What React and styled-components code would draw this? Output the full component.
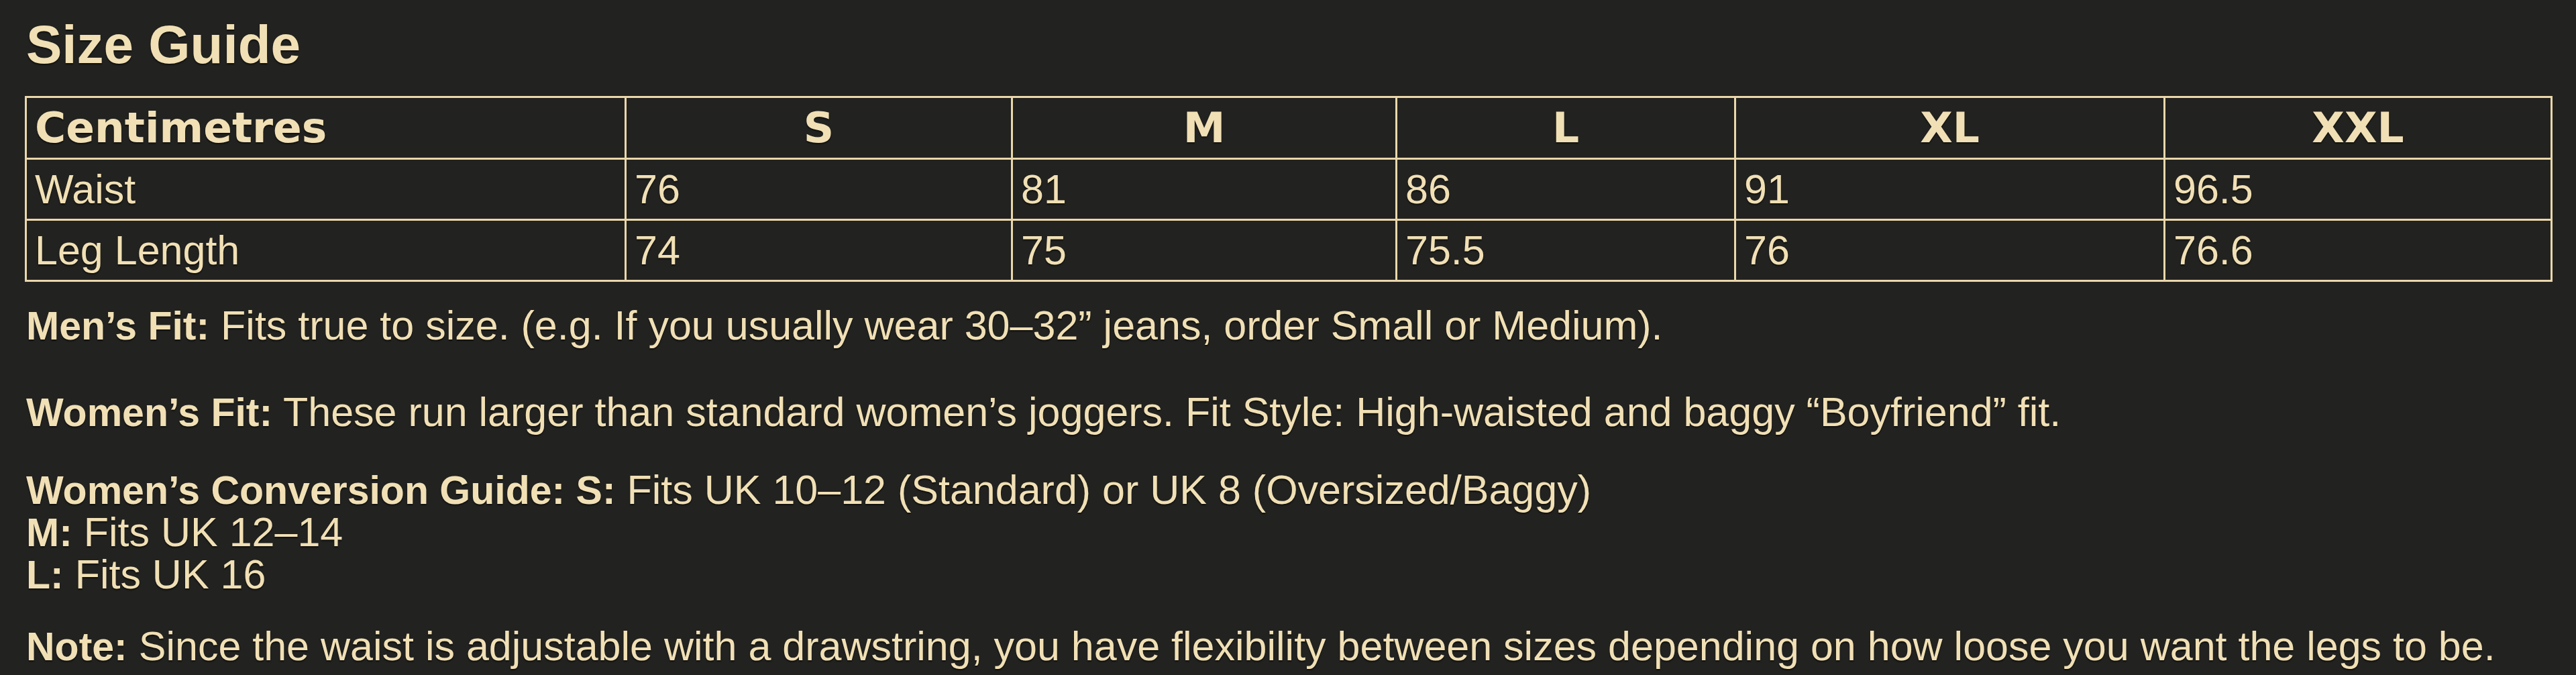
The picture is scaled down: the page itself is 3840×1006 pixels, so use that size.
import styled, { createGlobalStyle } from "styled-components";

const GlobalStyle = createGlobalStyle`
  html, body {
    margin: 0;
    padding: 0;
    background: #222220;
  }
  body {
    color: #f1e0b5;
    font-family: "Liberation Sans", Arial, sans-serif;
  }
`;

const Page = styled.div`
  padding: 0 37px;
  min-height: 1006px;
  box-sizing: border-box;
  text-shadow: 0 2px 2px rgba(0, 0, 0, 0.55);
`;

const Title = styled.h2`
  margin: 19px 0 28px 2px;
  font-size: 80px;
  line-height: 96px;
  font-weight: 700;
`;

const SizeTable = styled.table`
  width: 100%;
  table-layout: fixed;
  border-collapse: collapse;
  border: 3px solid #ead7aa;
`;

const HeadCell = styled.th`
  height: 89px;
  padding: 0 12px;
  border: 3px solid #ead7aa;
  font-family: "DejaVu Sans", Verdana, sans-serif;
  font-size: 63px;
  font-weight: 700;
  text-align: ${({ $left }) => ($left ? "left" : "center")};
  vertical-align: middle;
`;

const Cell = styled.td`
  height: 88px;
  padding: 0 12px;
  border: 3px solid #ead7aa;
  font-size: 61px;
  vertical-align: middle;
`;

const Para = styled.p`
  margin: ${({ $top }) => $top}px 0 0 2px;
  font-size: 61px;
  line-height: 62px;

  strong {
    font-size: 59px;
  }
`;

const sizes = ["S", "M", "L", "XL", "XXL"];
const colWidths = [894, 576, 573, 505, 640, 577];

const rows = [
  { label: "Waist", values: ["76", "81", "86", "91", "96.5"] },
  { label: "Leg Length", values: ["74", "75", "75.5", "76", "76.6"] },
];

export default function App() {
  return (
    <>
      <GlobalStyle />
      <Page>
        <Title>Size Guide</Title>
        <SizeTable>
          <colgroup>
            {colWidths.map((w, i) => (
              <col key={i} style={{ width: w }} />
            ))}
          </colgroup>
          <thead>
            <tr>
              <HeadCell $left>Centimetres</HeadCell>
              {sizes.map((s) => (
                <HeadCell key={s}>{s}</HeadCell>
              ))}
            </tr>
          </thead>
          <tbody>
            {rows.map((row) => (
              <tr key={row.label}>
                <Cell>{row.label}</Cell>
                {row.values.map((v, i) => (
                  <Cell key={i}>{v}</Cell>
                ))}
              </tr>
            ))}
          </tbody>
        </SizeTable>

        <Para $top={34}>
          <strong>Men’s Fit:</strong> Fits true to size. (e.g. If you usually wear 30–32” jeans, order Small or Medium).
        </Para>
        <Para $top={66}>
          <strong>Women’s Fit:</strong> These run larger than standard women’s joggers. Fit Style: High-waisted and baggy “Boyfriend” fit.
        </Para>
        <Para $top={53}>
          <strong>Women’s Conversion Guide: S:</strong> Fits UK 10–12 (Standard) or UK 8 (Oversized/Baggy)
          <br />
          <strong>M:</strong> Fits UK 12–14
          <br />
          <strong>L:</strong> Fits UK 16
        </Para>
        <Para $top={44}>
          <strong>Note:</strong> Since the waist is adjustable with a drawstring, you have flexibility between sizes depending on how loose you want the legs to be.
        </Para>
      </Page>
    </>
  );
}
